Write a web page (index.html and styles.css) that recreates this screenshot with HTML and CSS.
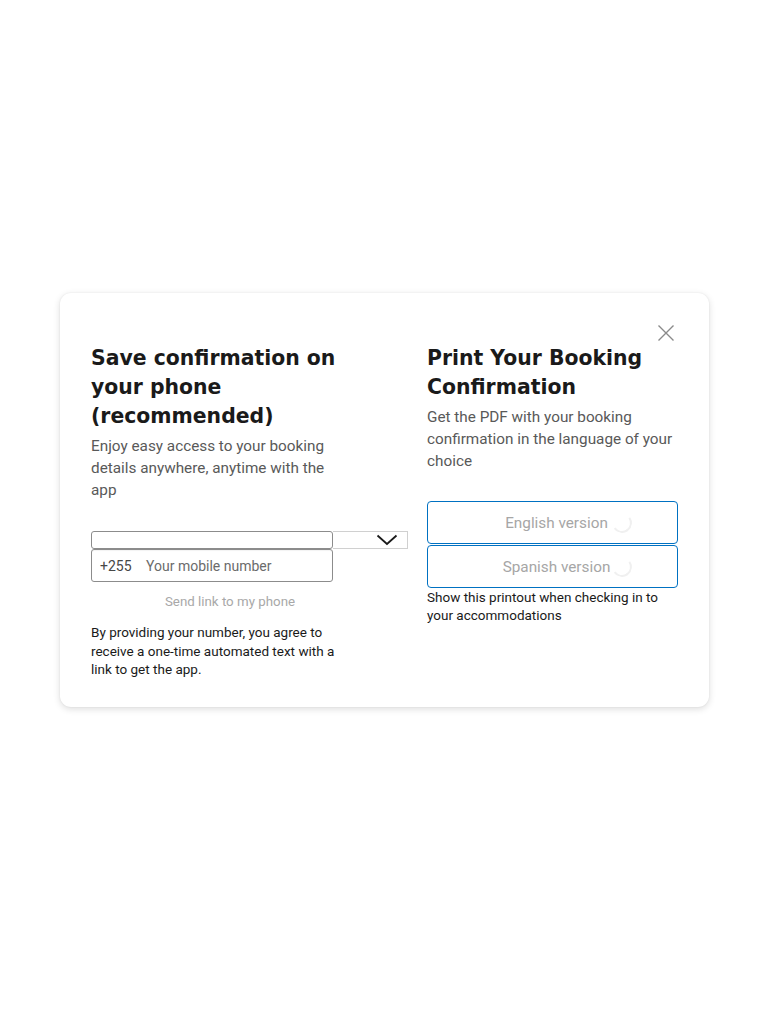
FILE: index.html
```
<!DOCTYPE html>
<html>
<head>
<meta charset="utf-8">
<link rel="stylesheet" href="styles.css">
</head>
<body>
<div class="page">
  <div class="card">
    <div class="close-row">
      <button class="close" aria-label="Close">
        <svg width="18" height="18" viewBox="0 0 18 18"><path d="M1.5 1.5L16.5 16.5M16.5 1.5L1.5 16.5" stroke="#8a8a8a" stroke-width="1.4" fill="none"/></svg>
      </button>
    </div>
    <div class="cols">
      <div class="col left">
        <h2 class="title">Save confirmation on your phone (recommended)</h2>
        <p class="desc">Enjoy easy access to your booking details anywhere, anytime with the app</p>
        <div class="select-row">
          <div class="select-box"></div>
          <div class="select-arrow">
            <svg width="22" height="12" viewBox="0 0 22 12"><path d="M1.5 1.5L11 10L20.5 1.5" stroke="#1a1a1a" stroke-width="1.8" fill="none"/></svg>
          </div>
        </div>
        <div class="phone-input">
          <span class="prefix">+255</span>
          <span class="placeholder">Your mobile number</span>
        </div>
        <div class="send-link">Send link to my phone</div>
        <p class="note">By providing your number, you agree to receive a one-time automated text with a link to get the app.</p>
      </div>
      <div class="col right">
        <h2 class="title">Print Your Booking Confirmation</h2>
        <p class="desc">Get the PDF with your booking confirmation in the language of your choice</p>
        <div class="buttons">
          <button class="version-btn"><span class="btn-text">English version</span><span class="spinner"></span></button>
          <button class="version-btn"><span class="btn-text">Spanish version</span><span class="spinner"></span></button>
        </div>
        <p class="note small">Show this printout when checking in to your accommodations</p>
      </div>
    </div>
  </div>
</div>
</body>
</html>
```

FILE: styles.css
```
* { box-sizing: border-box; }
html, body { margin: 0; padding: 0; background: #fff; }
body { font-family: Roboto, "Liberation Sans", Arial, sans-serif; color: #1a1a1a; padding-bottom: 40px; }
.page { padding: 293px 59px 0 60px; }
.card {
  width: 649px;
  height: 414px;
  background: #fff;
  border-radius: 11px;
  box-shadow: 0 2px 7px rgba(0,0,0,0.14), 0 0 2px rgba(0,0,0,0.07);
  padding: 31px 31px 0 31px;
}
.close-row { display: flex; justify-content: flex-end; height: 20px; margin-right: 3px; }
.close { background: none; border: 0; padding: 0; width: 18px; height: 18px; cursor: pointer; display: flex; }
.cols { display: grid; grid-template-columns: 245px 251px; column-gap: 91px; margin-top: 0; }
.title {
  font-family: "DejaVu Sans", Verdana, sans-serif;
  font-weight: bold;
  font-size: 20.4px;
  line-height: 29px;
  margin: 0;
  color: #1a1a1a;
}
.desc { margin: 4px 0 0; font-size: 15.3px; line-height: 22px; color: #595959; }
.select-row { display: flex; margin-top: 30px; height: 18px; width: 317px; }
.select-box { flex: 0 0 242px; height: 18px; border: 1px solid #8c8c8c; border-radius: 3px; }
.select-arrow { flex: 0 0 75px; height: 18px; border: 1px solid #d0d0d0; border-left: 0; display: flex; justify-content: flex-end; align-items: center; padding-right: 9px; }
.phone-input { width: 242px; height: 33px; border: 1px solid #8c8c8c; border-radius: 3px; display: flex; align-items: center; padding-left: 8px; font-size: 14px; box-shadow: inset 0 1px 1px rgba(0,0,0,0.05); }
.prefix { color: #474747; width: 46px; }
.placeholder { color: #6b6b6b; }
.send-link { width: 278px; text-align: center; font-size: 13.3px; color: #a8a8a8; margin-top: 11px; line-height: 18px; }
.note { margin: 12px 0 0; font-size: 13.5px; line-height: 18.5px; color: #1a1a1a; }
.buttons { margin-top: 29px; display: flex; flex-direction: column; gap: 1px; }
.version-btn {
  position: relative;
  width: 251px; height: 43px;
  background: #fff;
  border: 1px solid #0071c2;
  border-radius: 4px;
  font-family: Roboto, "Liberation Sans", Arial, sans-serif;
  font-size: 15.3px;
  color: #a6a6a6;
  padding: 0 0 0 8px;
  display: flex; align-items: center; justify-content: center;
}
.spinner {
  position: absolute;
  left: 184px; top: 11px;
  width: 20px; height: 20px;
  border-radius: 50%;
  border: 2px solid #f0f0f0;
  border-top-color: transparent;
  border-left-color: transparent;
  transform: rotate(10deg);
}
.note.small { margin-top: 0; line-height: 18px; }
```
